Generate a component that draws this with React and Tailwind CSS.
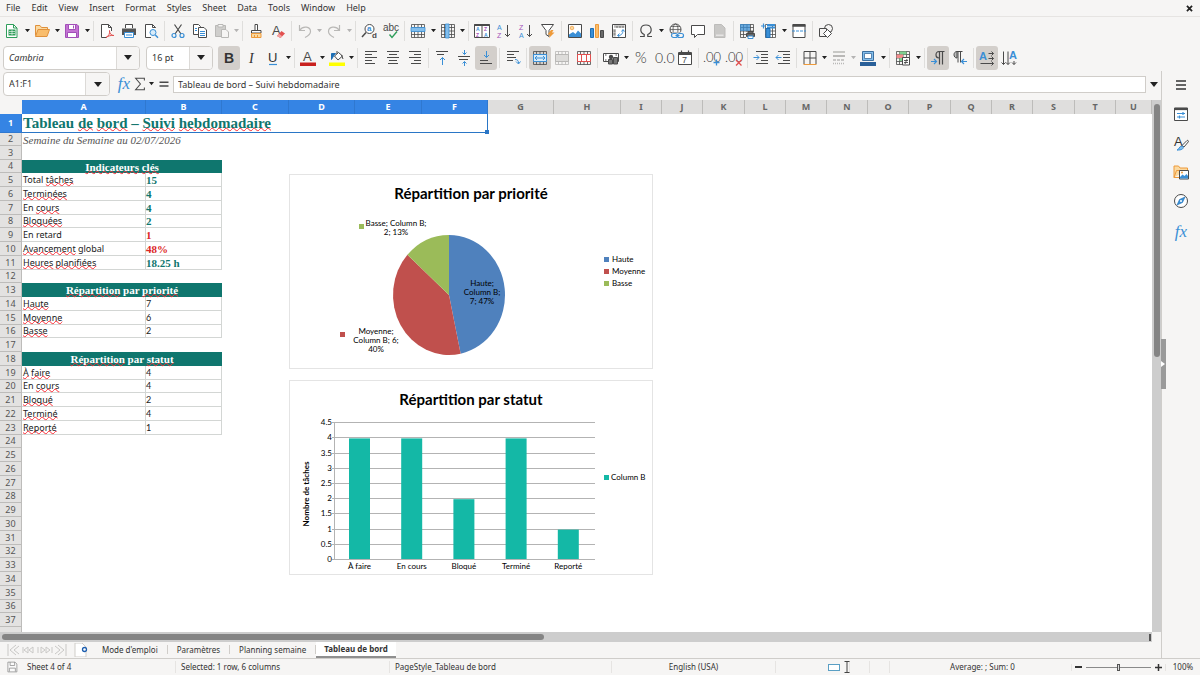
// src/App.jsx
import React from 'react';
import { clsx } from 'clsx';

// ── Icon drawings (16 × 16) ──────────────────────────────
const K = '#4a4a4a';
const B = '#3a8fd6';
const L = '#83beec';
const G = '#b9b8b6';
const R = '#e2504f';
const O = '#ee9a3a';
const P = '#a24fb8';

const lines = (list, color = K) => list.map(([x1, x2, y]) => <path key={`${x1}-${y}`} d={`M${x1} ${y}.5H${x2}`} stroke={color} />);
const glyph = (x, y, size, fill, text, weight = 400) => (
  <text x={x} y={y} fontSize={size} fill={fill} fontWeight={weight} stroke="none">{text}</text>
);
const thin = (x, y, size, text) => (
  <text x={x} y={y} fontSize={size} fill="#333" fontWeight="300" fontFamily="Lato" stroke="none">{text}</text>
);
const tableGrid = (color = K) => (
  <path d="M1.5 1.5H14.5V14.5H1.5ZM1.5 4.5H14.5M1.5 8H14.5M1.5 11.5H14.5M4.5 1.5V14.5M8 1.5V14.5M11.5 1.5V14.5" stroke={color} strokeWidth=".8" />
);

const ICONS = {
  new: <><path d="M2.5 1.5H9.5L13 5V14.5H2.5Z" fill="#fff" stroke="#2f9e5b" /><path d="M9.5 1.5V5H13" stroke="#2f9e5b" /><path d="M4.5 6.5H11.5V12.5H4.5Z" fill="#2f9e5b" /><path d="M5 8.5H11M5 10.5H11M8 7V12" stroke="#fff" strokeWidth=".6" /></>,
  open: <><path d="M1.5 12.5V2.5H6L7.5 4.5H13.5V6.5" fill="#fbd9a0" stroke="#e0913c" /><path d="M4 6.5H15.5L13 13.5H1.5Z" fill="#f9bd6c" stroke="#e0913c" /></>,
  save: <><path d="M1.5 1.5H13L14.5 3V14.5H1.5Z" fill="#c473d3" stroke={P} /><path d="M4.5 1.5H11.5V6.5H4.5ZM3.5 9.5H12.5V14.5H3.5Z" fill="#fff" stroke={P} /><path d="M9.5 2.5V5.5" stroke={P} /></>,
  pdf: <><path d="M12.5 8V4.5L9.5 1.5H2.5V14.5H8" fill="#fff" stroke={K} /><path d="M9.5 1.5V4.5H12.5" stroke={K} /><path d="M7 14.5C10 13 11 10 10.5 7.5C10.5 11 12.5 12.5 15 12.5C12 12 9 13 7 14.5Z" stroke={R} /></>,
  print: <><path d="M4.5 5V1.5H11.5V5" fill="#fff" stroke={K} /><path d="M1 5.5H15V12H1Z" fill="#555" /><path d="M3.5 9.5H12.5V14.5H3.5Z" fill="#fff" stroke={B} /><path d="M5 12H11" stroke={B} /></>,
  preview: <><path d="M12.5 5V4.5L9.5 1.5H2.5V14.5H8" fill="#fff" stroke={K} /><path d="M9.5 1.5V4.5H12.5" stroke={K} /><circle cx="10" cy="9.500" r="3" fill="#d8ecfa" stroke={B} /><path d="M12.3 12L15 14.7" stroke={B} strokeWidth="1.5" /></>,
  cut: <><path d="M4.5 1.5L11 11M11.5 1.5L5 11" stroke={K} strokeWidth="1.2" /><circle cx="4" cy="12.500" r="2" stroke={B} strokeWidth="1.2" /><circle cx="12" cy="12.500" r="2" stroke={B} strokeWidth="1.2" /></>,
  copy: <><path d="M1.5 1.5H6.5L8.5 3.5V11.5H1.5Z" fill="#fff" stroke={K} /><path d="M6.5 4.5H12L14.5 7V14.5H6.5Z" fill="#fff" stroke={K} /><path d="M8 8.5H13M8 10.5H13M8 12.5H13M3 5.5H5M3 7.5H5" stroke={B} /></>,
  paste: <><path d="M1.5 2.5H11.5V13.5H1.5Z" fill="#cfcecc" stroke={G} /><path d="M4 1.5H9V4H4Z" fill="#f6f5f4" stroke={G} /><path d="M7.5 6.5H12L14.5 9V14.5H7.5Z" fill="#f6f5f4" stroke={G} /></>,
  clone: <><path d="M7 1.5H9.5V7.5H7Z" fill="#fff" stroke={K} /><path d="M3.5 7.5H13V10H3.5Z" fill="#fff" stroke={K} /><path d="M3.5 10.5H13V14.5H3.5Z" fill="#fbd9a0" stroke={O} /><path d="M6.5 12V14M9.5 12V14" stroke={O} /></>,
  clear: <>{glyph(2, 12, 13, K, 'A')}<path d="M7 13L11.5 8L15 10.5L10.5 15Z" fill={R} /><path d="M7 13L9 10.8L12.3 13.2L10.5 15Z" fill="#f3a0a0" /></>,
  undo: <path d="M2.5 2V7.5H8M3 7C6 2.5 13.5 3.5 13.5 8.5C13.5 11 11 13 8 14.5" stroke={G} strokeWidth="1.2" />,
  redo: <path d="M13.5 2V7.5H8M13 7C10 2.5 2.5 3.5 2.5 8.5C2.5 11 5 13 8 14.5" stroke={G} strokeWidth="1.2" />,
  find: <><circle cx="8.500" cy="6" r="4.500" fill="#fff" stroke={K} /><path d="M5 9.5L1 14" stroke={K} strokeWidth="1.5" />{glyph(6, 8, 8, B, 'a', 700)}{glyph(11, 15, 8, K, 'd', 700)}</>,
  spell: <>{glyph(0, 8, 10, K, 'abc')}<path d="M6.5 11.5L9 14.5L14 8.5" stroke="#2f9e5b" strokeWidth="1.4" /></>,
  rows: <>{tableGrid()}<path d="M1 4.5H15V8.5H1Z" fill={L} stroke={B} strokeWidth=".8" /></>,
  cols: <>{tableGrid()}<path d="M5.5 1V15H9V1Z" fill={L} stroke={B} strokeWidth=".8" /></>,
  sort: <><path d="M.5 1.5H15.5V14.5H.5ZM8 2V14.5" fill="#fff" stroke={K} /><path d="M.5 2H15.5" stroke={K} strokeWidth="2" />{glyph(2, 8, 5, B, 'A', 700)}{glyph(2, 14, 5, P, 'Z', 700)}{glyph(10, 8, 5, P, 'Z', 700)}{glyph(10, 14, 5, B, 'A', 700)}</>,
  asc: <>{glyph(1, 6.5, 7, B, 'A')}{glyph(1, 15, 7, P, 'Z')}<path d="M11.5 2V13.5M9 11L11.5 13.5L14 11" stroke={K} /></>,
  desc: <>{glyph(1, 6.5, 7, P, 'Z')}{glyph(1, 15, 7, B, 'A')}<path d="M11.5 2V13.5M9 11L11.5 13.5L14 11" stroke={K} /></>,
  filter: <><path d="M1.5 1.5H13.5L9 7.5V13.5L6 11.5V7.5Z" fill="#fff" stroke={K} /><path d="M11 7L7.5 11.5H10L9 15L14.5 9.5H12L13.5 7Z" fill={O} /></>,
  image: <><path d="M1.5 1.5H14.5V14.5H1.5Z" fill="#fff" stroke={K} /><path d="M2 14V11.5L6 9L8.5 11L11 7.5L14 10.5V14Z" fill={B} /><circle cx="5" cy="5" r="1.8" fill="#fbd9a0" stroke={O} strokeWidth=".7" /></>,
  chart: <><path d="M1.5 5.5H4.5V14.5H1.5Z" fill={B} stroke="#1e6fb5" /><path d="M6.5 1.5H9.5V14.5H6.5Z" fill="#f9bd6c" stroke={O} /><path d="M11.5 7.5H14.5V14.5H11.5Z" fill="#6a6a6a" stroke={K} /></>,
  pivot: <><path d="M1.5 1.5H14.5V14.5H1.5Z" fill="#fff" stroke={K} /><path d="M3 3.5H13.5M3.5 6V13.5" stroke={G} strokeWidth="2.5" /><path d="M6 3V5M9 3V5M12 3V5M2.5 8H4.5M2.5 11H4.5" stroke={K} strokeWidth=".7" /><path d="M7 12.5C10 12.5 12 11 12 7M6.5 12.5L8.5 10.5M6.5 12.5L8.5 14M10.5 8.5L12 6.5L13.5 8.5" stroke={B} /></>,
  omega: <path d="M2 13.5H6.2V11.5C1 9 2 2 8 2C14 2 15 9 9.8 11.5V13.5H14" stroke={K} strokeWidth="1.2" />,
  link: <><circle cx="7.500" cy="6.500" r="5.500" stroke={K} /><ellipse cx="7.500" cy="6.500" rx="2.500" ry="5.500" stroke={K} strokeWidth=".8" /><path d="M2 6.5H13M3 3.5H12M3 9.5H12" stroke={K} strokeWidth=".7" /><path d="M4 9.5H16V16H4Z" fill="#f6f5f4" /><rect x="3.500" y="10.500" width="6" height="4" rx="2" stroke={B} strokeWidth="1.2" /><rect x="9.500" y="10.500" width="6" height="4" rx="2" stroke={B} strokeWidth="1.2" /><path d="M7.5 12.5H11.5" stroke={B} /></>,
  comment: <path d="M1.5 2.5H14.5V11.5H7.5L4.5 14.5V11.5H1.5Z" fill="#fff" stroke={K} />,
  header: <><path d="M2.5 1.5H9.5L13 5V14.5H2.5Z" fill="#c9c8c6" stroke="#bdbcba" /><path d="M4 11.5H11.5V13H4Z" fill="#e6e5e4" /></>,
  printArea: <>{tableGrid()}<path d="M1 1H11V8H1Z" fill={B} opacity=".75" /><path d="M7 9H15.5V15.5H7Z" fill="#f6f5f4" /><path d="M9 10V8.5H14V10M7.5 10.5H15.5V13.5H7.5Z" fill="#666" stroke={K} /><path d="M9 13H14V15.5H9Z" fill="#fff" stroke={B} /></>,
  freeze: <><path d="M4.5 1.5H14.5V14.5H4.5ZM4.5 8H14.5M4.5 11.5H14.5M11.5 1.5V14.5" fill="#fff" stroke={K} strokeWidth=".8" /><path d="M6 2H14M6 4.5H14" stroke={B} strokeWidth="2" /><path d="M5 5.5H9V14.5H5Z" fill={B} stroke="#1e6fb5" /><path d="M2.5 .5V5.5M0 3H5" stroke={B} strokeWidth="1.2" /></>,
  split: <><path d="M2 1.5H14V14.5H2Z" fill="#fff" stroke={K} /><path d="M1.5 2.5H14.5" stroke={K} strokeWidth="2.5" /><path d="M1 8H15" stroke={B} strokeDasharray="3 1" /></>,
  shapes: <><circle cx="10.500" cy="5.500" r="4" stroke={K} /><path d="M1.5 5.5H8.5V13.5H1.5Z" fill="#f6f5f4" stroke={K} /><path d="M9.5 6.5L13.5 10.5L9.5 14.5L5.5 10.5Z" fill="#fff" stroke={K} /></>,

  bold: glyph(3, 13, 14, '#333', 'B', 700),
  italic: <text x="6" y="13" fontSize="14" fill="#333" fontStyle="italic" fontFamily="Liberation Serif">I</text>,
  underline: <>{glyph(3, 12, 13, '#333', 'U')}<path d="M4 14.5H12" stroke={B} strokeWidth="1.2" /></>,
  color: <>{glyph(3, 10.5, 13, K, 'A')}<path d="M0 12.5H16V16H0Z" fill="#c9211e" /></>,
  highlight: <><path d="M5.5 6L9.5 2.5L13.5 6L9 10Z" fill="#fff" stroke={K} /><path d="M8 4V1M12.5 5L14 9" stroke={K} /><path d="M2.5 9.5V3.5H6.5L4.5 6Z" fill="#1e6fb5" stroke="#1e6fb5" /><path d="M0 12.5H16V16H0Z" fill="#ffff00" /></>,
  left: lines([[2, 14, 1], [2, 9, 4], [2, 14, 7], [2, 9, 10], [2, 12, 13]]),
  center: lines([[2, 14, 1], [4, 12, 4], [2, 14, 7], [4, 12, 10], [3, 13, 13]]),
  right: lines([[2, 14, 1], [7, 14, 4], [2, 14, 7], [7, 14, 10], [4, 14, 13]]),
  top: <>{lines([[2, 14, 1], [3, 10, 4]])}<path d="M8.5 15V7.5M6 10L8.5 7.5L11 10" stroke={B} /></>,
  middle: <>{lines([[2, 14, 6], [3, 12, 9]])}<path d="M8.5 0V4.5M6.5 2.5L8.5 4.5L10.5 2.5M8.5 16V11.5M6.5 13.5L8.5 11.5L10.5 13.5" stroke={B} /></>,
  bottom: <>{lines([[2, 10, 10], [2, 14, 13]])}<path d="M8.5 1V7.5M6 5L8.5 7.5L11 5" stroke={B} /></>,
  wrap: <>{lines([[2, 14, 1], [2, 9, 4], [2, 11, 7], [2, 8, 10]])}<path d="M10 9.5C13 9.5 13.5 11 13.5 13.5M11 11.5L13.5 14L15.5 11.5" stroke={B} /></>,
  merge: <>{tableGrid()}<path d="M1.5 4.5H14.5V11.5H1.5Z" fill="#d8ecfa" stroke={B} /><path d="M3 8H13M5 6L3 8L5 10M11 6L13 8L11 10" stroke={B} /></>,
  mergeCells: <>{tableGrid(G)}<path d="M1.5 4.5H14.5V11.5H1.5Z" fill="#dddcda" stroke={G} /></>,
  unmerge: <>{tableGrid()}<path d="M1.5 4.5H14.5V11.5H1.5ZM5.5 4.5V11.5M10.5 4.5V11.5" fill="#fff" stroke={R} /></>,
  currency: <><path d="M.5 3.5H15.5V11.5H.5Z" fill="#fff" stroke={K} /><circle cx="8" cy="7" r="2.2" fill={K} /><path d="M2 5H3.5M12.5 5H14M2 10H3.5" stroke={K} /><path d="M5.5 9.5H9.5V14H5.5ZM10.5 7.5H14.5V14H10.5Z" fill="#777" stroke={K} /></>,
  percent: thin(2, 13, 15, '%'),
  number: thin(0, 13, 14, '0.0'),
  date: <><path d="M1.5 2.5H14.5V14.5H1.5Z" fill="#fff" stroke={K} /><path d="M1.5 4H14.5" stroke={K} strokeWidth="2" /><path d="M4.5 .5V3M11.5 .5V3" stroke={K} strokeWidth="1.2" />{glyph(5, 13, 9, K, '7')}</>,
  addDec: <>{thin(-1, 12, 13, '.00')}<path d="M12.5 9.5V15.5M9.5 12.5H15.5" stroke={B} strokeWidth="1.3" /></>,
  delDec: <>{thin(-1, 12, 13, '.00')}<path d="M10 10L15.5 15.5M15.5 10L10 15.5" stroke={R} strokeWidth="1.3" /></>,
  indent: <>{lines([[3, 15, 1], [8, 15, 4], [8, 15, 7], [8, 15, 10], [3, 15, 13]])}<path d="M.5 7.5H6M3.5 5L6 7.5L3.5 10" stroke={B} /></>,
  outdent: <>{lines([[3, 15, 1], [8, 15, 4], [8, 15, 7], [8, 15, 10], [3, 15, 13]])}<path d="M6.5 7.5H1M3.5 5L1 7.5L3.5 10" stroke={B} /></>,
  borders: <><path d="M2 1.5H14M2 8H14M2 1.5V14M8 1.5V14M14 1.5V14" stroke={K} /><path d="M1.5 14.5H14.5" stroke={O} /></>,
  lineStyle: <><path d="M2 2H14" stroke={G} strokeWidth="1.5" /><path d="M2 6H14" stroke={G} strokeWidth="2" /><path d="M2 10H14" stroke={G} strokeWidth="1.5" strokeDasharray="3 1" /><path d="M2 13.5H14" stroke={G} strokeWidth="1.5" strokeDasharray="1 1" /></>,
  borderColor: <><path d="M2.5 1.5H13.5V10.5H2.5Z" fill={L} stroke="#3c6f9f" /><path d="M4.5 3.5H11.5V8.5H4.5Z" fill="#fff" stroke="#3c6f9f" strokeWidth=".8" /><path d="M0 12H16V16H0Z" fill="#2a6099" /></>,
  conditional: <>{tableGrid()}<path d="M4.5 1.5H11.5V4.5H4.5Z" fill="#7fcf8f" /><path d="M1.5 4.5H8V8H1.5Z" fill="#f28b8b" /><path d="M4.5 8H8V11H4.5Z" fill="#7fcf8f" /><path d="M7.5 7.5H14.5V15H7.5Z" fill="#fff" stroke={K} /><path d="M9 10.5H13M9 12.5H13M12 9L10 14" stroke={K} strokeWidth=".9" /></>,
  ltr: <><path d="M14.5 1.5H9C5 1.5 5 8 9 8M9.5 1.5V14.5M12.5 1.5V14.5" stroke={K} strokeWidth="1.2" /><path d="M1 11.5H6.5M4 9L6.5 11.5L4 14" stroke={B} strokeWidth="1.2" /></>,
  rtl: <><path d="M10.5 1.5H5C1 1.5 1 8 5 8V1.5" fill="#bbb" stroke={K} /><path d="M6 1.5V12.5M8.5 1.5V12.5" stroke={K} /><path d="M15 11.5H9.5M12 9L9.5 11.5L12 14" stroke={B} strokeWidth="1.2" /></>,
  horizontal: <>{glyph(0, 10, 11, B, 'A', 700)}<path d="M9.5 3.5H14.5M12.5 1.5L14.5 3.5L12.5 5.5M9.5 8.5H14.5M12.5 6.5L14.5 8.5L12.5 10.5M1.5 13.5H14.5M12.5 11.5L14.5 13.5L12.5 15.5" stroke={K} /></>,
  vertical: <>{glyph(8, 9, 11, B, 'A', 700)}<path d="M2.5 1.5V14.5M.5 12.5L2.5 14.5L4.5 12.5M7 1.5V14.5M5 12.5L7 14.5L9 12.5M13 11V14.5M11 12.5L13 14.5L15 12.5" stroke={K} /></>,

  sigma: <path d="M13 4V1.5H3L8.5 8L3 14.5H13V12" stroke={K} strokeWidth="1.2" />,
  equals: <path d="M2 5.5H14M2 10.5H14" stroke={K} strokeWidth="2" />,
  menu: <path d="M3 4H13M3 8H13M3 12H13" stroke="#333" strokeWidth="1.5" />,
  properties: <><path d="M1.5 2H14.5V14.5H1.5Z" fill="#fff" stroke={K} /><path d="M1.5 3H14.5" stroke={K} strokeWidth="2.2" /><path d="M4 7.5H12M10 6V9M4 11H12M6.5 9.5V12.5" stroke={B} strokeWidth="1.2" /></>,
  styles: <>{glyph(1, 11, 13, '#333', 'A')}<path d="M14 5.5C15 5 15.8 6 15.2 7L11 12L9 10.5Z" fill="#fff" stroke={K} /><path d="M4 15C6 15 6 11 9 11C12 12 10 15.5 4 15Z" fill={L} stroke={B} /></>,
  gallery: <><path d="M1 13.5V2H5.5L7 4H14.5V6M1 13.5H6" fill="#fbd9a0" stroke={O} /><path d="M1 13.5L3.5 6.5H15V9" stroke={O} /><path d="M6.5 6.5H15.5V15H6.5Z" fill="#fff" stroke={K} /><path d="M7 14.5V13L9.5 10.5L11.5 12L13.5 10L15 12V14.5Z" fill={B} /><circle cx="9" cy="8.500" r="1" fill={O} /></>,
  navigator: <><circle cx="8" cy="8" r="6.500" fill="#fff" stroke={K} /><path d="M12 4L9.5 9.5L4 12L6.5 6.5Z" fill={B} stroke="#1e6fb5" strokeWidth=".6" /><circle cx="8" cy="8" r="1" fill="#fff" /></>,
  doc: <><path d="M2.5 1.5H12L14.5 4V14.5H2.5Z" fill="#fafafa" stroke="#8a8a8a" /><path d="M5.5 1.5V6H11.5V1.5M4.5 14V9.5H12.5V14" stroke="#8a8a8a" /></>,
};

const MENUS = ['File', 'Edit', 'View', 'Insert', 'Format', 'Styles', 'Sheet', 'Data', 'Tools', 'Window', 'Help'];

// '|' separator, 'v' dropdown arrow, 'w' slim dropdown arrow, '*' prefix = pressed
const STANDARD = 'new v open v save v | pdf print preview | cut copy paste w | clone clear | undo w redo v | find spell | rows v cols w | sort asc desc filter | image chart pivot | omega v link comment header | printArea freeze v split | shapes';
const FORMATTING = '*bold italic underline v | color w highlight w | left center right | top middle *bottom | wrap | *merge mergeCells unmerge | currency v percent number date | addDec delDec | indent outdent | borders w lineStyle w borderColor v | conditional v | *ltr rtl | *horizontal vertical';
const DIMMED = ['paste', 'undo', 'redo', 'lineStyle'];

function Icon({ name, className = 'size-4' }) {
  return (
    <svg viewBox="0 0 16 16" fill="none" className={clsx("shrink-0 overflow-visible font-['Liberation_Sans',sans-serif]", className)} aria-hidden="true">
      {ICONS[name]}
    </svg>
  );
}

function Caret({ className = 'w-1.5' }) {
  return <svg viewBox="0 0 8 5" className={clsx('shrink-0 fill-[#222]', className)} aria-hidden="true"><path d="M0 0H8L4 5Z" /></svg>;
}

function Fx() {
  return <span className="font-['Liberation_Serif',serif] text-[17px] leading-5 text-[#3a8fd6] italic">fx</span>;
}

function Tools({ spec }) {
  const items = spec.split(' ');
  return items.map((t, i) => {
    if (t === '|') return <span key={i} className="flex h-5 w-[5px] shrink-0 justify-center"><span className="w-px bg-[#dfdedc]" /></span>;
    if (t === 'v' || t === 'w') {
      const dim = DIMMED.includes(items[i - 1]);
      return (
        <button key={i} aria-label="More options" className={clsx('flex h-6 shrink-0 items-center justify-center', t === 'v' ? 'w-2' : 'w-[7px]', dim && 'opacity-30')}>
          <Caret className="w-[5px]" />
        </button>
      );
    }
    const pressed = t[0] === '*';
    const name = pressed ? t.slice(1) : t;
    return (
      <button key={i} aria-label={name} aria-pressed={pressed} className={clsx('flex h-6 w-[22px] shrink-0 items-center justify-center rounded-[3px]', pressed && 'bg-[#d3cfcb]')}>
        <Icon name={name} />
      </button>
    );
  });
}

function Combo({ label, value, className, inputClass, arrowClass }) {
  return (
    <div className={clsx('flex h-6 shrink-0 overflow-hidden rounded border border-[#d0cdc9] bg-white', className)}>
      <input aria-label={label} defaultValue={value} className={clsx('min-w-0 flex-1 pl-[5px] outline-none', inputClass)} />
      <button aria-label={`${label} list`} className={clsx('flex items-center justify-center border-l border-[#dcdad7] bg-[#f6f5f4]', arrowClass)}>
        <Caret className="w-2" />
      </button>
    </div>
  );
}

// ── Sheet data ───────────────────────────────────────────
// ~word~ marks words flagged by the spell checker
const SHEET = {
  1: { title: 'Tableau ~de~ ~bord~ – ~Suivi~ ~hebdomadaire~' },
  2: { note: 'Semaine du Semaine au 02/07/2026' },
  4: { head: '~Indicateurs~ ~clés~' },
  5: { a: 'Total ~tâches~', b: '15', tone: 'green' },
  6: { a: '~Terminées~', b: '4', tone: 'green' },
  7: { a: 'En ~cours~', b: '4', tone: 'green' },
  8: { a: '~Bloquées~', b: '2', tone: 'green' },
  9: { a: 'En retard', b: '1', tone: 'red' },
  10: { a: '~Avancement~ global', b: '48%', tone: 'red' },
  11: { a: '~Heures~ ~planifiées~', b: '18.25 h', tone: 'green' },
  13: { head: '~Répartition~ par ~priorité~' },
  14: { a: '~Haute~', b: '7' },
  15: { a: '~Moyenne~', b: '6' },
  16: { a: '~Basse~', b: '2' },
  18: { head: '~Répartition~ par ~statut~' },
  19: { a: '~À~ ~faire~', b: '4' },
  20: { a: 'En ~cours~', b: '4' },
  21: { a: '~Bloqué~', b: '2' },
  22: { a: '~Terminé~', b: '4' },
  23: { a: '~Reporté~', b: '1' },
};

const COLUMNS = [
  ['A', 'w-[124px]'], ['B', 'w-[76px]'], ['C', 'w-[67px]'], ['D', 'w-[66px]'], ['E', 'w-[67px]'], ['F', 'w-[66px]'],
  ['G', 'w-[66px]'], ['H', 'w-[67px]'], ['I', 'w-[41px]'], ['J', 'w-[41px]'], ['K', 'w-[42px]'], ['L', 'w-[41px]'],
  ['M', 'w-[41px]'], ['N', 'w-[41px]'], ['O', 'w-[41px]'], ['P', 'w-[42px]'], ['Q', 'w-[41px]'], ['R', 'w-[41px]'],
  ['S', 'w-[42px]'], ['T', 'w-[41px]'], ['U', ''],
];

function Spelled({ text }) {
  return text.split('~').map((part, i) => (i % 2
    ? <span key={i} className="underline decoration-red-500 decoration-wavy decoration-1 -underline-offset-1 [text-decoration-skip-ink:none]">{part}</span>
    : part));
}

function rowHeight(n) {
  if (n === 1) return 'h-[19px]';
  return n === 2 || n % 4 === 0 ? 'h-[13px]' : 'h-[14px]';
}

function RowCells({ row }) {
  if (!row) return <td colSpan={21} />;
  if (row.title) {
    return (
      <>
        <td colSpan={6} className="relative border-r border-b border-[#2a76c6] pl-px font-['Liberation_Serif',serif] text-[15px] leading-[17px] font-bold text-[#0f766e]">
          <Spelled text={row.title} />
          <span className="absolute -right-0.5 -bottom-0.5 size-1 bg-[#2a76c6]" />
        </td>
        <td colSpan={15} />
      </>
    );
  }
  if (row.note) {
    return <td colSpan={21} className="pl-px font-['Liberation_Serif',serif] text-[11px] leading-3 text-[#555] italic">{row.note}</td>;
  }
  if (row.head) {
    return (
      <>
        <td colSpan={2} className="bg-[#0f766e] text-center font-['Liberation_Serif',serif] text-[11px] leading-3 font-bold text-white"><Spelled text={row.head} /></td>
        <td colSpan={19} />
      </>
    );
  }
  return (
    <>
      <td className="border-r border-b border-[#d3d6d4] pl-px leading-3 text-[#222]"><Spelled text={row.a} /></td>
      <td className={clsx(
        'border-r border-b border-[#d3d6d4] leading-3',
        row.tone ? "font-['Liberation_Serif',serif] text-[11px] font-bold" : "font-['Lato',sans-serif] text-[#222]",
        row.tone === 'green' && 'text-[#0f766e]',
        row.tone === 'red' && 'text-[#dc2626]',
      )}>{row.b}</td>
      <td colSpan={19} />
    </>
  );
}

function Sheet() {
  return (
    <table className="w-full table-fixed border-separate border-spacing-0 text-[9px]">
      <colgroup>
        <col className="w-[22px]" />
        {COLUMNS.map(([c, w]) => <col key={c} className={w} />)}
      </colgroup>
      <thead>
        <tr className="h-[14px] leading-3">
          <th className="bg-[#f6f5f4]" />
          {COLUMNS.map(([c], i) => (
            <th key={c} className={clsx('border-r', i < 6 ? 'border-[#2f78d0] bg-[#3584e4] text-white' : 'border-[#bdbcba] bg-[#dfdedd] text-[#666]')}>{c}</th>
          ))}
        </tr>
      </thead>
      <tbody>
        {Array.from({ length: 38 }, (_, i) => i + 1).map((n) => (
          <tr key={n} className={rowHeight(n)}>
            <th className={clsx('border-r border-b leading-3', n === 1 ? 'border-[#2f78d0] bg-[#3584e4] font-bold text-white' : 'border-[#bdbcba] bg-[#e3e2e1] font-normal text-[#555]')}>{n < 38 && n}</th>
            <RowCells row={SHEET[n]} />
          </tr>
        ))}
      </tbody>
    </table>
  );
}

// ── Charts ───────────────────────────────────────────────
const SLICES = [
  { name: 'Haute', value: 7, color: '#4f81bd' },
  { name: 'Moyenne', value: 6, color: '#c0504d' },
  { name: 'Basse', value: 2, color: '#9bbb59' },
];
const BARS = [['À faire', 4], ['En cours', 4], ['Bloqué', 2], ['Terminé', 4], ['Reporté', 1]];

function PieChart() {
  const total = SLICES.reduce((s, d) => s + d.value, 0);
  const at = (v) => {
    const a = (v / total) * Math.PI * 2;
    return `${160 + 56 * Math.sin(a)} ${121 - 60 * Math.cos(a)}`;
  };
  let acc = 0;
  return (
    <svg viewBox="0 0 364 195" className="h-[195px] w-[364px] font-['Lato',sans-serif]" fontSize="8" fill="#000">
      <rect x=".5" y=".5" width="363" height="194" fill="#fff" stroke="#e4e4e4" />
      <text x="182" y="25" fontSize="15" fontWeight="700" textAnchor="middle">Répartition par priorité</text>
      {SLICES.map((s) => {
        const from = acc;
        acc += s.value;
        return <path key={s.name} fill={s.color} d={`M160 121L${at(from)}A56 60 0 0 1 ${at(acc)}Z`} />;
      })}
      <path d="M126 88L127 92L131 93L127 95Z" fill="#c0504d" />
      <rect x="70" y="50" width="5" height="5" fill="#9bbb59" />
      <g textAnchor="middle">
        <text x="107" y="52">Basse; Column B;</text>
        <text x="107" y="61">2; 13%</text>
        <text x="193" y="112">Haute;</text>
        <text x="193" y="121">Column B;</text>
        <text x="193" y="130">7; 47%</text>
        <text x="87" y="160">Moyenne;</text>
        <text x="87" y="169">Column B; 6;</text>
        <text x="87" y="178">40%</text>
      </g>
      <rect x="51" y="158" width="5" height="5" fill="#c0504d" />
      {SLICES.map((s, i) => (
        <g key={s.name}>
          <rect x="315" y={83 + i * 12} width="5" height="5" fill={s.color} />
          <text x="323" y={88 + i * 12}>{s.name}</text>
        </g>
      ))}
    </svg>
  );
}

function BarChart() {
  const y = (v) => 180 - v * 30.4;
  return (
    <svg viewBox="0 0 364 195" className="h-[195px] w-[364px] font-['Lato',sans-serif]" fontSize="8" fill="#000">
      <rect x=".5" y=".5" width="363" height="194" fill="#fff" stroke="#e4e4e4" />
      <text x="182" y="25" fontSize="15" fontWeight="700" textAnchor="middle">Répartition par statut</text>
      {[0, 0.5, 1, 1.5, 2, 2.5, 3, 3.5, 4, 4.5].map((v) => (
        <g key={v}>
          <path d={`M43 ${Math.round(y(v)) - 0.5}H306`} stroke="#b3b3b3" />
          <text x="43" y={y(v) + 2} textAnchor="end">{v}</text>
        </g>
      ))}
      <path d="M45.5 43V180" stroke="#b3b3b3" />
      {BARS.map(([name, v], i) => (
        <g key={name}>
          <rect x={60 + i * 52.2} y={y(v)} width="21" height={v * 30.4 - 1} fill="#14b8a6" />
          <text x={70.5 + i * 52.2} y="189" textAnchor="middle">{name}</text>
        </g>
      ))}
      <text transform="translate(20 114) rotate(-90)" textAnchor="middle" fontWeight="700">Nombre de tâches</text>
      <rect x="315" y="95" width="5" height="5" fill="#14b8a6" />
      <text x="322" y="100">Column B</text>
    </svg>
  );
}

const TABS = ["Mode d'emploi", 'Paramètres', 'Planning semaine'];

export default function App() {
  return (
    <div className="flex h-screen flex-col overflow-hidden bg-[#f6f5f4] font-['Noto_Sans',sans-serif] text-[9px] text-[#333]">
      <nav className="flex h-[17px] shrink-0 items-center gap-[11px] border-b border-[#e6e4e2] pl-1.5">
        {MENUS.map((m) => <button key={m} className="leading-3">{m}</button>)}
        <button aria-label="Close" className="mr-[7px] ml-auto">
          <svg viewBox="0 0 6 6" className="size-[7px]"><path d="M.8 .8L5.2 5.2M5.2 .8L.8 5.2" stroke="#222" strokeWidth="1.5" /></svg>
        </button>
      </nav>
      <div className="flex h-[27px] shrink-0 items-center pl-px"><Tools spec={STANDARD} /></div>
      <div className="flex h-[27px] shrink-0 items-center pl-[3px]">
        <Combo label="Font name" value="Cambria" className="mr-1.5 w-[137px]" inputClass="italic" arrowClass="w-[23px]" />
        <Combo label="Font size" value="16 pt" className="mr-[5px] w-[67px]" arrowClass="w-[23px]" />
        <Tools spec={FORMATTING} />
      </div>

      <div className="flex min-h-0 flex-1">
        <main className="flex min-w-0 flex-1 flex-col">
          <div className="flex h-[29px] shrink-0 items-center pb-[3px] pl-[3px]">
            <Combo label="Name Box" value="A1:F1" className="w-[107px]" arrowClass="w-6" />
            <button aria-label="Function Wizard" className="mr-px ml-1.5 flex w-4 justify-center"><Fx /></button>
            <button aria-label="Select Function" className="flex items-center gap-0.5"><Icon name="sigma" className="size-3.5" /><Caret className="w-[5px]" /></button>
            <button aria-label="Formula" className="mr-[3px] ml-1"><Icon name="equals" className="size-3" /></button>
            <input aria-label="Input line" defaultValue="Tableau de bord – Suivi hebdomadaire" className="h-[17px] min-w-0 flex-1 border border-[#d0cdc9] bg-white pl-1 outline-none" />
            <button aria-label="Expand formula bar" className="flex w-[15px] justify-center"><Caret className="w-2" /></button>
          </div>

          <div className="flex min-h-0 flex-1">
            <div className="relative min-w-0 flex-1 overflow-hidden bg-white">
              <Sheet />
              <div className="absolute top-[74px] left-[289px] flex flex-col gap-[11px]">
                <PieChart />
                <BarChart />
              </div>
            </div>
            <div className="w-[9px] shrink-0 bg-[#cdcdcd] px-[1px] pt-1">
              <div className="mx-auto h-[253px] w-1.5 rounded-full bg-[#848484]" />
            </div>
          </div>

          <div className="mr-[9px] flex h-[10px] shrink-0 items-center justify-between bg-[#cdcdcd] pl-0.5">
            <div className="h-1.5 w-[542px] rounded-full bg-[#848484]" />
            <div className="mr-px h-[7px] w-0.5 bg-[#555]" />
          </div>

          <div className="flex h-4 shrink-0 items-center text-[8px]">
            <div className="flex w-[74px] justify-center">
              <svg viewBox="0 0 60 12" fill="none" className="h-3 w-[60px]" stroke="#c9c8c6">
                <path d="M1 0V12M9 1L3 6L9 11M12 2L7 6L12 10M16 3V9M21 3L17 6L21 9ZM26 3L22 6L26 9ZM31 3V9M34 3L38 6L34 9ZM39 3L43 6L39 9ZM45 3V9M48 2L53 6L48 10M51 1L57 6L51 11M59 0V12" />
              </svg>
            </div>
            <button aria-label="Add sheet" className="mr-[5px]">
              <svg viewBox="0 0 14 14" fill="none" className="size-3.5"><path d="M1 0H8L12 4V14H1Z" fill="#fff" stroke="#d0cdc9" /><circle cx="10.500" cy="6.500" r="2" fill="#fff" stroke="#1e5faf" strokeWidth="1.3" /></svg>
            </button>
            {TABS.map((t) => <button key={t} className="mb-0.5 border-r border-[#d0cdc9] px-[9px] leading-[9px]">{t}</button>)}
            <button className="h-4 border-b-2 border-[#8f8f8f] bg-white px-2 leading-[14px] font-bold">Tableau de bord</button>
          </div>
        </main>

        <aside className="relative flex w-[39px] shrink-0 flex-col items-center gap-[13px] border-l border-[#cfcdca] pt-1.5">
          <button aria-label="Sidebar Settings"><Icon name="menu" /></button>
          <button aria-label="Properties"><Icon name="properties" /></button>
          <button aria-label="Styles"><Icon name="styles" /></button>
          <button aria-label="Gallery"><Icon name="gallery" /></button>
          <button aria-label="Navigator"><Icon name="navigator" /></button>
          <button aria-label="Functions" className="leading-4"><Fx /></button>
          <button aria-label="Hide sidebar" className="absolute top-[268px] -left-px flex h-[50px] w-[5px] items-center bg-[#9a9a9a]">
            <svg viewBox="0 0 4 6" className="w-1 fill-white"><path d="M0 0L4 3L0 6Z" /></svg>
          </button>
        </aside>
      </div>

      <footer className="flex h-[17px] shrink-0 items-center border-t border-[#cfcdca] text-[8px] leading-3">
        <div className="flex w-[175px] items-center gap-[9px] pl-1.5"><Icon name="doc" className="size-3" />Sheet 4 of 4</div>
        <div className="w-[214px] border-l border-[#e6e4e2] pl-[5px]">Selected: 1 row, 6 columns</div>
        <div className="w-[222px] border-l border-[#e6e4e2] pl-[5px]">PageStyle_Tableau de bord</div>
        <div className="flex-1 border-l border-[#e6e4e2] text-center">English (USA)</div>
        <div className="flex w-[75px] items-center gap-1 border-r border-l border-[#e6e4e2]">
          <span className="ml-[52px] h-[7px] w-3 shrink-0 border border-[#5a9fc4] bg-white" />
          <svg viewBox="0 0 6 12" fill="none" className="h-3 w-1.5 shrink-0" stroke="#444"><path d="M.5 .5H5.5M3 .5V11.5M.5 11.5H5.5" /></svg>
        </div>
        <div className="h-3 w-5 border-r border-[#e6e4e2]" />
        <div className="h-3 w-5 border-r border-[#e6e4e2]" />
        <div className="w-[181px] pl-1 text-center">Average: ; Sum: 0</div>
        <div className="flex w-[95px] items-center justify-center gap-1 border-r border-l border-[#e6e4e2]">
          <button aria-label="Zoom out" className="h-0.5 w-[7px] bg-[#333]" />
          <input type="range" aria-label="Zoom" className="h-px w-[65px] appearance-none bg-[#8a8a8a] [&::-webkit-slider-thumb]:h-[7px] [&::-webkit-slider-thumb]:w-[3px] [&::-webkit-slider-thumb]:appearance-none [&::-webkit-slider-thumb]:border [&::-webkit-slider-thumb]:border-[#555] [&::-webkit-slider-thumb]:bg-[#ddd]" />
          <button aria-label="Zoom in"><svg viewBox="0 0 7 7" className="size-[7px]" stroke="#333" strokeWidth="1.5"><path d="M0 3.5H7M3.5 0V7" /></svg></button>
        </div>
        <div className="w-[34px] text-center">100%</div>
      </footer>
    </div>
  );
}
